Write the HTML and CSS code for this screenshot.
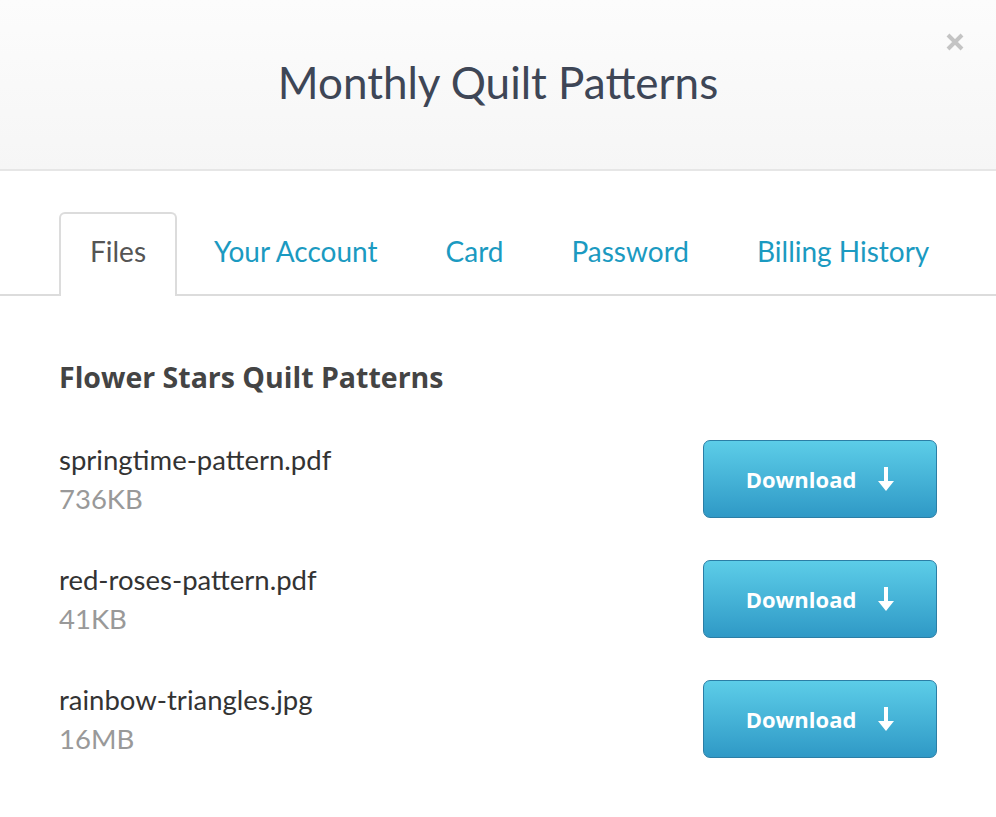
FILE: index.html
```html
<!DOCTYPE html>
<html lang="en">
<head>
    <meta charset="UTF-8">
    <meta name="viewport" content="width=device-width, initial-scale=1.0">
    <title>Monthly Quilt Patterns</title>
    <link rel="stylesheet" href="styles.css">
</head>
<body>
    <div class="modal">
        <div class="modal-header">
            <h1>Monthly Quilt Patterns</h1>
            <button class="close" aria-label="Close">
                <svg width="20" height="20" viewBox="0 0 20 20"><path d="M3 3L17 17M17 3L3 17" stroke="#c4c4c4" stroke-width="4"/></svg>
            </button>
        </div>

        <ul class="tabs">
            <li class="tab active"><a href="#">Files</a></li>
            <li class="tab"><a href="#">Your Account</a></li>
            <li class="tab"><a href="#">Card</a></li>
            <li class="tab"><a href="#">Password</a></li>
            <li class="tab"><a href="#">Billing History</a></li>
        </ul>

        <div class="files">
            <h2>Flower Stars Quilt Patterns</h2>

            <div class="file-row">
                <div class="file-info">
                    <div class="file-name">springtime-pattern.pdf</div>
                    <div class="file-size">736KB</div>
                </div>
                <a class="download-btn" href="#">Download
                    <svg width="16" height="24" viewBox="0 0 16 24"><path d="M6 0H10V14H16L8 24L0 14H6Z" fill="white"/></svg>
                </a>
            </div>

            <div class="file-row">
                <div class="file-info">
                    <div class="file-name">red-roses-pattern.pdf</div>
                    <div class="file-size">41KB</div>
                </div>
                <a class="download-btn" href="#">Download
                    <svg width="16" height="24" viewBox="0 0 16 24"><path d="M6 0H10V14H16L8 24L0 14H6Z" fill="white"/></svg>
                </a>
            </div>

            <div class="file-row">
                <div class="file-info">
                    <div class="file-name">rainbow-triangles.jpg</div>
                    <div class="file-size">16MB</div>
                </div>
                <a class="download-btn" href="#">Download
                    <svg width="16" height="24" viewBox="0 0 16 24"><path d="M6 0H10V14H16L8 24L0 14H6Z" fill="white"/></svg>
                </a>
            </div>
        </div>
    </div>
</body>
</html>
```

FILE: styles.css
```css
body {
    margin: 0;
    background-color: #fff;
    font-family: Lato, "Open Sans", Arial, sans-serif;
    color: #333;
}
.modal {
    width: 996px;
}
.modal-header {
    position: relative;
    height: 169px;
    background: linear-gradient(#fcfcfc, #f6f6f6);
    border-bottom: 2px solid #e6e6e6;
    display: flex;
    justify-content: center;
    align-items: center;
}
.modal-header h1 {
    margin: 0 0 6px 0;
    font-size: 44px;
    font-weight: 400;
    color: #3e4656;
}
.close {
    position: absolute;
    top: 32px;
    right: 31px;
    background: none;
    border: none;
    padding: 0;
    cursor: pointer;
}
.tabs {
    list-style: none;
    margin: 41px 0 0 0;
    padding: 0 0 0 59px;
    display: flex;
    gap: 6px;
    border-bottom: 2px solid #dcdcdc;
}
.tab {
    margin-bottom: -2px;
    border: 2px solid transparent;
    border-bottom: none;
    border-radius: 6px 6px 0 0;
}
.tab a {
    display: block;
    padding: 0 29px 6px 29px;
    height: 76px;
    line-height: 74px;
    font-size: 28px;
    color: #1b9ac1;
    text-decoration: none;
}
.tab.active {
    border-color: #dcdcdc;
    background-color: #fff;
}
.tab.active a {
    color: #555;
}
.files {
    padding: 63px 59px 0 59px;
}
.files h2 {
    margin: 0 0 45px 0;
    font-family: "Open Sans", Arial, sans-serif;
    font-size: 28.5px;
    line-height: 36px;
    font-weight: 700;
    color: #444;
}
.file-row {
    display: flex;
    justify-content: space-between;
    align-items: center;
    margin-bottom: 42px;
}
.file-name {
    font-size: 27.5px;
    color: #333;
    line-height: 39px;
}
.file-size {
    font-size: 27.5px;
    color: #999;
    line-height: 39px;
}
.download-btn {
    display: flex;
    align-items: center;
    justify-content: center;
    gap: 22px;
    width: 232px;
    height: 76px;
    border: 1px solid #2b7ea6;
    border-radius: 7px;
    background: linear-gradient(#5ccde8, #2f99c6);
    color: #fff;
    font-family: "Open Sans", Arial, sans-serif;
    font-size: 22px;
    font-weight: 700;
    text-decoration: none;
}
```
